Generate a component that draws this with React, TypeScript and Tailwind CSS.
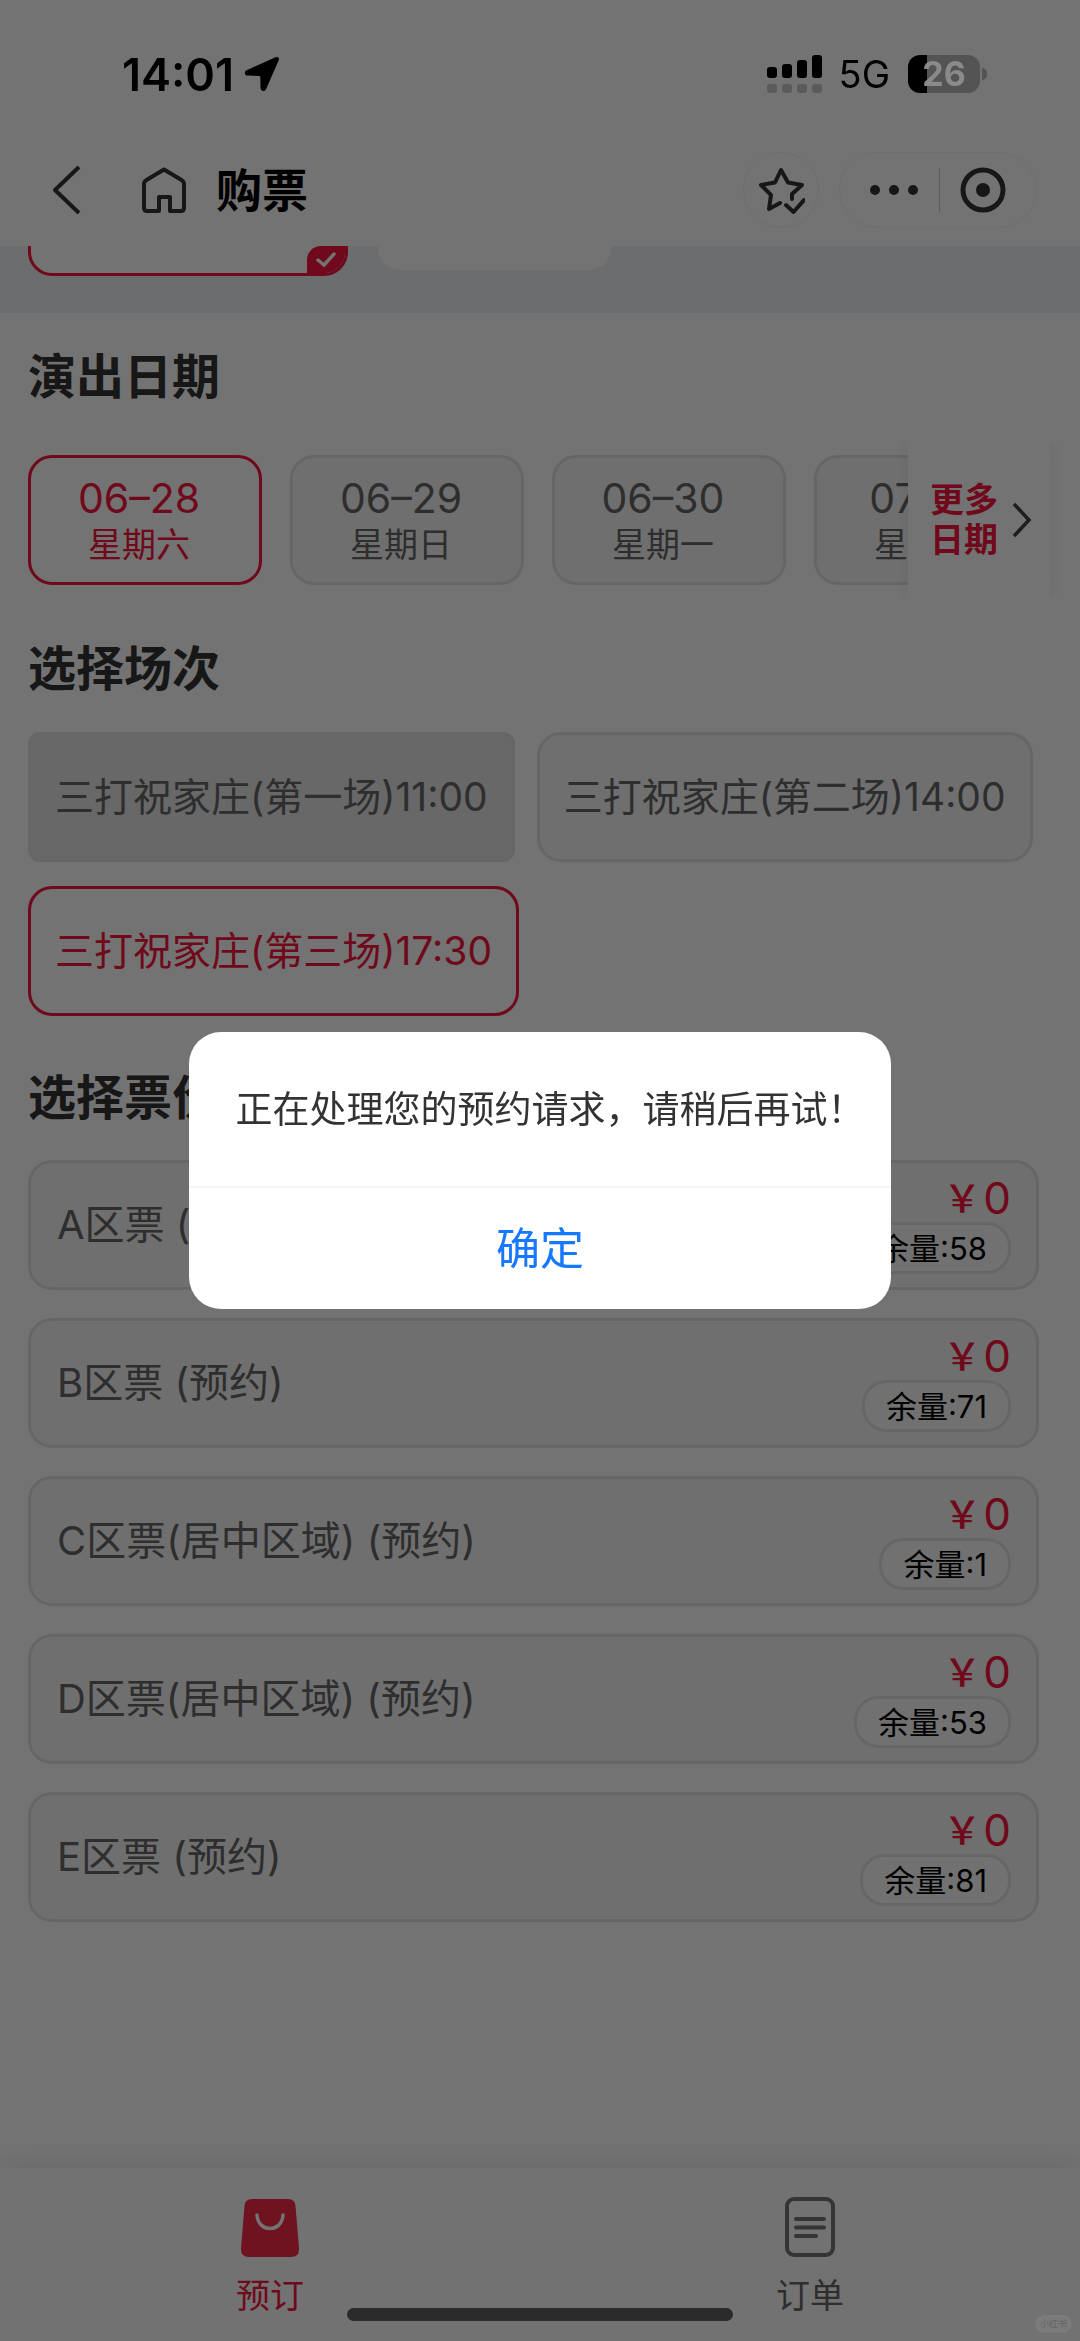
import React, { useState } from 'react';

interface ShowDate {
  day: string;
  weekday: string;
}

interface Session {
  id: number;
  label: string;
  disabled?: boolean;
}

interface Ticket {
  id: string;
  name: string;
  price: number;
  left: number;
}

const DATES: ShowDate[] = [
  { day: '06–28', weekday: '星期六' },
  { day: '06–29', weekday: '星期日' },
  { day: '06–30', weekday: '星期一' },
  { day: '07–01', weekday: '星期二' },
];

const SESSIONS: Session[] = [
  { id: 1, label: '三打祝家庄(第一场)11:00', disabled: true },
  { id: 2, label: '三打祝家庄(第二场)14:00' },
  { id: 3, label: '三打祝家庄(第三场)17:30' },
];

const TICKETS: Ticket[] = [
  { id: 'A', name: 'A区票 (预约)', price: 0, left: 58 },
  { id: 'B', name: 'B区票 (预约)', price: 0, left: 71 },
  { id: 'C', name: 'C区票(居中区域) (预约)', price: 0, left: 1 },
  { id: 'D', name: 'D区票(居中区域) (预约)', price: 0, left: 53 },
  { id: 'E', name: 'E区票 (预约)', price: 0, left: 81 },
];

// System status bar, stays above the modal mask
const StatusBar: React.FC = () => (
  <div className="relative z-20 flex h-[134px] items-center justify-between pt-[14px] pr-[93px] pl-[122px] text-black">
    <div className="flex items-center gap-[10px]">
      <span className="text-[45px] leading-none font-semibold">14:01</span>
      <svg className="h-9 w-9" viewBox="0 0 36 36" fill="currentColor">
        <path d="M31.500 1.200 2.600 14.200C-.1 15.500.4 19.400 3.500 19.600L15.300 19.900Q16.300 19.900 16.300 20.900L16.500 31.800C16.600 35.300 20.500 36.200 22 33.200L34.700 4.200C35.600 2 33.800.2 31.500 1.200Z" />
      </svg>
    </div>
    <div className="flex items-center">
      <svg className="h-[38px] w-[56px]" viewBox="0 0 56 38">
        <g fill="#000">
          <rect x="0" y="12" width="10" height="11" rx="3" />
          <rect x="15" y="9" width="10" height="14" rx="3" />
          <rect x="30" y="5" width="10" height="18" rx="3" />
          <rect x="45" y="0" width="10" height="23" rx="3" />
        </g>
        <g fill="#5b5b5b">
          <rect x="0" y="29" width="10" height="9" rx="3" />
          <rect x="15" y="29" width="10" height="9" rx="3" />
          <rect x="30" y="29" width="10" height="9" rx="3" />
          <rect x="45" y="29" width="10" height="9" rx="3" />
        </g>
      </svg>
      <span className="ml-4 text-[38px] leading-none">5G</span>
      <div className="ml-[18px] flex items-center gap-[2px]">
        <div className="flex h-[38px] w-[72px] items-center justify-center rounded-[12px] bg-linear-to-r from-black from-26% to-[#545454] to-26% text-[34px] leading-none font-bold text-[#8a8a8a]">
          26
        </div>
        <div className="h-3 w-[5px] rounded-r-full bg-[#545454]" />
      </div>
    </div>
  </div>
);

const NavBar: React.FC = () => (
  <header className="flex h-28 items-center justify-between bg-white pr-[43px] pl-[52px]">
    <div className="flex items-center">
      <button aria-label="返回">
        <svg className="h-[50px] w-[30px]" viewBox="0 0 30 50" fill="none" stroke="#333" strokeWidth="4" strokeLinejoin="round">
          <path d="M27 2 3 25 27 48" />
        </svg>
      </button>
      <button aria-label="首页" className="ml-[60px]">
        <svg className="h-[46px] w-[44px]" viewBox="0 0 44 46" fill="none" stroke="#333" strokeWidth="4" strokeLinejoin="round">
          <path d="M22 2.500 39.500 13Q42 14.500 42 17V41Q42 44 39 44H28V30H17V44H5Q2 44 2 41V17Q2 14.500 4.500 13Z" />
        </svg>
      </button>
      <h1 className="ml-[30px] text-[46px] leading-none font-bold text-black">购票</h1>
    </div>
    <div className="flex items-center gap-5">
      <button aria-label="收藏" className="flex h-[76px] w-[76px] items-center justify-center rounded-full border border-[#f3f3f3]">
        <svg className="h-12 w-12" viewBox="0 0 48 48" fill="none" stroke="#333" strokeWidth="4" strokeLinecap="round" strokeLinejoin="round">
          <path d="M23 37 12 43 14 29 4 19 18 16.500 24 4 31 16.500 45 19 35 28V33" />
          <path d="M29 39 36.500 46 47 34" />
        </svg>
      </button>
      <div className="flex h-[76px] w-[198px] items-center rounded-full border border-[#f3f3f3]">
        <button aria-label="更多" className="flex w-[99px] justify-center pl-2">
          <svg className="h-3 w-12" viewBox="0 0 48 12" fill="#333">
            <circle cx="5" cy="6" r="5" />
            <circle cx="24" cy="6" r="5" />
            <circle cx="43" cy="6" r="5" />
          </svg>
        </button>
        <span className="h-11 w-px bg-[#ccc]" />
        <button aria-label="关闭" className="flex flex-1 justify-center pr-[10px]">
          <svg className="h-[46px] w-[46px]" viewBox="0 0 46 46">
            <circle cx="23" cy="23" r="20" fill="none" stroke="#333" strokeWidth="5" />
            <circle cx="23" cy="23" r="7" fill="#333" />
          </svg>
        </button>
      </div>
    </div>
  </header>
);

// Bottom edges of the cards scrolled under the nav bar
const ScrolledCards: React.FC = () => (
  <div className="flex h-[67px] items-start gap-[30px] bg-[#edf1f4] pl-7">
    <div className="flex h-[30px] w-[320px] justify-end overflow-hidden rounded-b-[24px] border-x-[3px] border-b-[3px] border-[#f5153c] bg-white">
      <div className="flex w-[38px] items-center justify-center rounded-tl-[14px] bg-[#f5153c]">
        <svg className="h-4 w-5" viewBox="0 0 20 16" fill="none" stroke="#fff" strokeWidth="3.500" strokeLinecap="round">
          <path d="M2 8 8 13 18 2" />
        </svg>
      </div>
    </div>
    <div className="h-6 w-[233px] rounded-b-[22px] bg-white" />
  </div>
);

const SectionTitle: React.FC<{ children: React.ReactNode }> = ({ children }) => (
  <h2 className="text-[48px] leading-[60px] font-bold text-[#333]">{children}</h2>
);

const App: React.FC = () => {
  const [date, setDate] = useState('06–28');
  const [session, setSession] = useState(3);
  const [message, setMessage] = useState('正在处理您的预约请求，请稍后再试！');

  const sessionStyle = (s: Session) => {
    if (s.disabled) return 'rounded-[12px] border-[#e2e2e2] bg-[#e7e7e7] text-[#666]';
    if (s.id === session) return 'rounded-[24px] border-[#f5153c] bg-white text-[#f5153c]';
    return 'rounded-[24px] border-[#e2e2e2] bg-[#f7f7f7] text-[#666]';
  };

  return (
    <div className="flex min-h-screen flex-col bg-white font-[Inter,'Noto_Sans_CJK_SC',sans-serif]">
      <StatusBar />
      <NavBar />
      <ScrolledCards />

      <main className="flex-1 pt-[34px] pr-[41px] pb-10 pl-7">
        <SectionTitle>演出日期</SectionTitle>
        <div className="relative -mr-[41px] mt-[34px] flex h-[158px] items-center overflow-hidden">
          <div className="flex shrink-0 gap-7">
            {DATES.map(d => (
              <button
                key={d.day}
                onClick={() => setDate(d.day)}
                className={`flex h-[130px] w-[234px] flex-col items-center justify-center rounded-[24px] border-[3px] pr-3 ${d.day === date ? 'border-[#f5153c] bg-white text-[#f5153c]' : 'border-[#e2e2e2] bg-[#f7f7f7] text-[#666]'}`}
              >
                <span className="text-[41px] leading-[50px]">{d.day}</span>
                <span className="text-[34px] leading-[44px]">{d.weekday}</span>
              </button>
            ))}
          </div>
          <button className="absolute top-0 right-[30px] flex h-full w-[142px] items-center justify-center gap-[14px] bg-white pl-1 shadow-[0_0_16px_rgba(0,0,0,0.08)]">
            <span className="w-[68px] text-[34px] leading-10 font-bold text-[#f5153c]">更多日期</span>
            <svg className="h-9 w-5" viewBox="0 0 20 36" fill="none" stroke="#444" strokeWidth="3.500">
              <path d="M2 2 17 18 2 34" />
            </svg>
          </button>
        </div>

        <div className="mt-10">
          <SectionTitle>选择场次</SectionTitle>
        </div>
        <div className="mt-[33px] flex flex-wrap gap-x-[22px] gap-y-6">
          {SESSIONS.map(s => (
            <button
              key={s.id}
              disabled={s.disabled}
              onClick={() => setSession(s.id)}
              className={`h-[130px] border-[3px] px-6 text-[39px] whitespace-nowrap ${sessionStyle(s)}`}
            >
              {s.label}
            </button>
          ))}
        </div>

        <div className="mt-[52px]">
          <SectionTitle>选择票价</SectionTitle>
        </div>
        <ul className="mt-8 flex flex-col gap-7">
          {TICKETS.map(t => (
            <li key={t.id}>
              <button className="flex h-[130px] w-full items-center justify-between rounded-[24px] border-[3px] border-[#e2e2e2] bg-[#f7f7f7] pr-[25px] pl-[26px] text-[#666]">
                <span className="text-[40px]">{t.name}</span>
                <span className="flex flex-col items-end pb-[2px]">
                  <span className="flex items-center gap-[2px] text-[#f5153c]">
                    <span className="text-[38px] leading-[48px] font-medium">￥</span>
                    <span className="text-[44px] leading-[48px]">{t.price}</span>
                  </span>
                  <span className="flex h-[52px] items-center rounded-[24px] border-[3px] border-[#e2e2e2] bg-[#fafafa] px-[21px] text-[31px] leading-none text-black">
                    余量:{t.left}
                  </span>
                </span>
              </button>
            </li>
          ))}
        </ul>
      </main>

      <nav className="grid h-[173px] grid-cols-2 bg-[#fcfcfc] pt-7 shadow-[0_-8px_24px_rgba(0,0,0,0.08)]">
        <a href="#booking" className="flex flex-col items-center gap-4 text-[34px] leading-[44px] text-[#f5153c]">
          <svg className="h-[62px] w-[60px]" viewBox="0 0 60 62">
            <path d="M12 3H48Q55 3 55.500 10L59 52Q59.500 61 51 61H9Q.5 61 1 52L4.500 10Q5 3 12 3Z" fill="#f52a4a" />
            <path d="M17 19C18 37 42 37 43 19" fill="none" stroke="#fff" strokeWidth="3.500" strokeLinecap="round" />
          </svg>
          预订
        </a>
        <a href="#orders" className="flex flex-col items-center gap-4 text-[34px] leading-[44px] text-[#666]">
          <svg className="h-[62px] w-[52px]" viewBox="0 0 52 62" fill="none" stroke="#777" strokeWidth="4">
            <rect x="3" y="3" width="46" height="56" rx="7" />
            <path d="M12 23H40M12 31.500H40M12 40H32" strokeLinecap="round" />
          </svg>
          订单
        </a>
      </nav>

      {message && (
        <div className="fixed inset-0 z-10 flex items-center justify-center bg-black/55">
          <div role="alertdialog" aria-label={message} className="w-[65%] overflow-hidden rounded-[32px] bg-white text-center">
            <p className="flex h-[154px] items-center justify-center pt-[2px] pl-5 text-[37px] whitespace-nowrap text-[#333]">{message}</p>
            <button onClick={() => setMessage('')} className="h-[123px] w-full border-t-[2px] border-[#f5f5f5] text-[44px] text-[#1677ff]">
              确定
            </button>
          </div>
        </div>
      )}

      {/* home indicator */}
      <div className="fixed bottom-5 left-1/2 z-20 h-[13px] w-[386px] -translate-x-1/2 rounded-full bg-[#2b2b2b]" />
      <span className="fixed right-2 bottom-2 z-20 rounded-full bg-[#7b7b7b] px-[5px] text-[9px] leading-[18px] text-[#656565]">小红书</span>
    </div>
  );
};

export default App;
